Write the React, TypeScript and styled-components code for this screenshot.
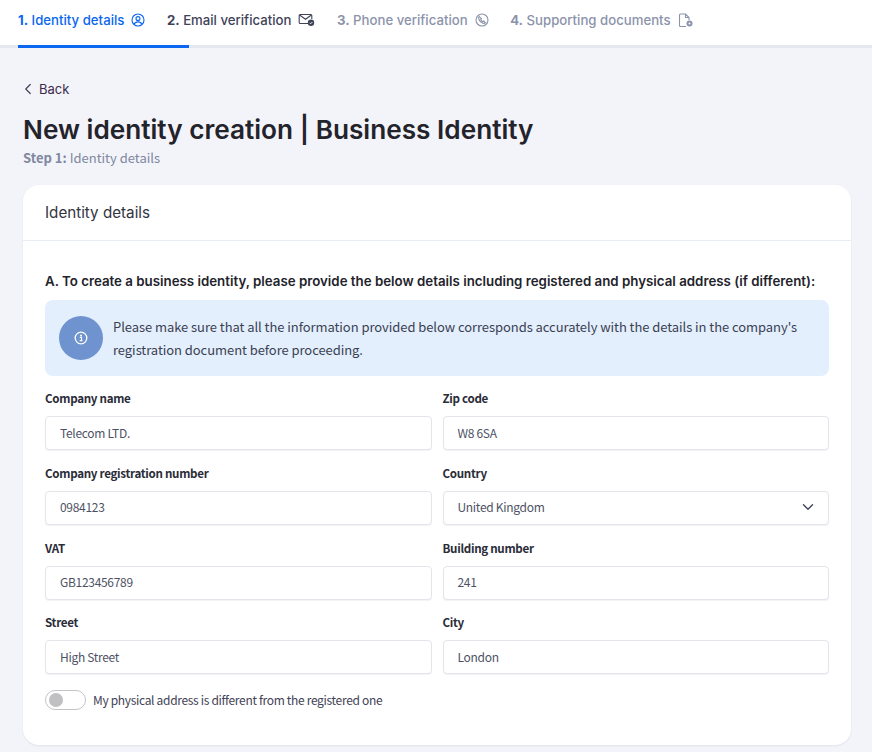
import styled, { createGlobalStyle } from "styled-components";
import { ChevronDown, ChevronLeft } from "lucide-react";

const GlobalStyle = createGlobalStyle`
  * {
    box-sizing: border-box;
  }

  body {
    margin: 0;
    background-color: #f3f4f9;
    font-family: "Noto Sans CJK SC", "Noto Sans", sans-serif;
    overflow: hidden;
  }
`;

const Page = styled.div`
  width: 872px;
  height: 752px;
  overflow: hidden;
`;

const TabBar = styled.nav`
  display: flex;
  gap: 21.5px;
  height: 48px;
  padding: 0 0 0 18px;
  background-color: #ffffff;
  border-bottom: 3px solid #e6e8f0;
`;

const Tab = styled.div<{ $state: "active" | "visited" | "todo" }>`
  position: relative;
  display: flex;
  align-items: center;
  gap: 7px;
  height: 45px;
  padding-bottom: 5px;
  font-family: "Inter", sans-serif;
  font-size: 13.2px;
  font-weight: 500;
  white-space: nowrap;
  color: ${(p) =>
    p.$state === "active" ? "#0b66f0" : p.$state === "visited" ? "#3f4358" : "#8c93ab"};

  ${(p) =>
    p.$state === "active" &&
    `&::after {
      content: "";
      position: absolute;
      left: 0;
      bottom: -3px;
      width: 171px;
      height: 3px;
      background-color: #0b66f0;
    }`}
`;

const TabNumber = styled.b`
  font-weight: 700;
`;

const Content = styled.main`
  padding: 31px 21px 0 23px;
`;

const BackLink = styled.a`
  display: flex;
  align-items: center;
  gap: 2px;
  height: 20px;
  margin-left: -4px;
  font-family: "Inter", sans-serif;
  font-size: 13px;
  color: #3c2a4d;
`;

const Title = styled.h1`
  margin: 14px 0 0;
  font-family: "Inter", sans-serif;
  font-size: 26.2px;
  line-height: 34px;
  font-weight: 600;
  color: #23232b;
`;

const StepLine = styled.p`
  margin: 1px 0 0;
  font-size: 13px;
  line-height: 20px;
  color: #8087a0;

  b {
    font-weight: 700;
  }
`;

const Card = styled.section`
  margin-top: 17px;
  background-color: #ffffff;
  border-radius: 16px;
  box-shadow: 0 1px 2px rgba(30, 40, 80, 0.08);
`;

const CardHeader = styled.header`
  display: flex;
  align-items: center;
  height: 56px;
  padding: 0 22px;
  border-bottom: 1px solid #e8edf3;
  font-family: "Inter", sans-serif;
  font-size: 15.2px;
  color: #33343f;
`;

const CardBody = styled.div`
  padding: 31px 22px 35px;
`;

const SectionHeading = styled.h2`
  margin: 0;
  font-family: "Inter", sans-serif;
  font-size: 13.3px;
  line-height: 18px;
  font-weight: 600;
  white-space: nowrap;
  color: #23232b;
`;

const Notice = styled.div`
  display: flex;
  align-items: center;
  gap: 10px;
  height: 76px;
  margin-top: 10px;
  padding: 0 14px;
  background-color: #e3effd;
  border-radius: 8px;
  font-size: 13px;
  line-height: 23px;
  letter-spacing: -0.06px;
  color: #3b3f52;
`;

const NoticeIcon = styled.span`
  display: flex;
  align-items: center;
  justify-content: center;
  flex: none;
  width: 44px;
  height: 44px;
  border-radius: 50%;
  background-color: #6f93cf;
`;

const FieldGrid = styled.div`
  display: grid;
  grid-template-columns: 1fr 1fr;
  column-gap: 11px;
  row-gap: 13.8px;
  margin-top: 13px;
`;

const Field = styled.div`
  display: flex;
  flex-direction: column;
  gap: 9px;
`;

const Label = styled.label`
  font-size: 11.6px;
  line-height: 18px;
  font-weight: 700;
  letter-spacing: -0.3px;
  color: #2a2c38;
`;

const InputBox = styled.div`
  display: flex;
  align-items: center;
  justify-content: space-between;
  height: 34px;
  padding: 0 11px 2px 14px;
  background-color: #ffffff;
  border: 1px solid #e3e5ea;
  border-radius: 4px;
  box-shadow: 0 1px 1px rgba(30, 40, 80, 0.06);
  font-size: 12px;
  letter-spacing: -0.3px;
  color: #4e5264;
`;

const ToggleRow = styled.div`
  display: flex;
  align-items: center;
  gap: 7px;
  margin-top: 16px;
  font-size: 12px;
  letter-spacing: -0.32px;
  color: #3f4256;
`;

const Toggle = styled.span`
  display: flex;
  align-items: center;
  width: 41px;
  height: 20px;
  padding-left: 3px;
  border: 1px solid #c4c4c8;
  border-radius: 10px;
  background-color: #ffffff;

  &::before {
    content: "";
    width: 14px;
    height: 14px;
    border-radius: 50%;
    background-color: #c0c0c2;
  }
`;

const ToggleLabel = styled.span`
  position: relative;
  top: -1px;
`;

const UserIcon = () => (
  <svg width="14" height="14" viewBox="0 0 14 14" fill="none" stroke="currentColor" strokeWidth="1.1">
    <circle cx="7" cy="7" r="6" />
    <circle cx="7" cy="5.6" r="2" />
    <path d="M3.2 11.2c.6-1.7 2-2.3 3.8-2.3s3.2.6 3.8 2.3" />
  </svg>
);

const MailIcon = () => (
  <svg width="17" height="14" viewBox="0 0 17 14" fill="none" stroke="currentColor" strokeWidth="1.1">
    <path d="M11 10.5H2.2a1 1 0 0 1-1-1V2.5a1 1 0 0 1 1-1h10.6a1 1 0 0 1 1 1V6" />
    <path d="M1.6 2l5.9 4.2L13.4 2" />
    <circle cx="13" cy="9.8" r="3.2" fill="currentColor" stroke="none" />
    <path d="M11.6 9.8l1 1 1.8-1.8" stroke="#ffffff" strokeWidth="0.9" />
  </svg>
);

const PhoneIcon = () => (
  <svg width="14" height="14" viewBox="0 0 14 14" fill="none" stroke="currentColor" strokeWidth="1.1">
    <circle cx="7" cy="7" r="6" />
    <path d="M4.2 3.6c-.7.7-.8 1.500-.5 2.400.7 2 2.300 3.600 4.300 4.300.9.300 1.700.200 2.400-.500L8.700 8l-.9.600C7 8.100 6.300 7.300 5.800 6.400l.6-.9z" />
  </svg>
);

const DocIcon = () => (
  <svg width="16" height="15" viewBox="0 0 16 15" fill="none" stroke="currentColor" strokeWidth="1.1">
    <path d="M8 13.500H2.500a1 1 0 0 1-1-1V2a1 1 0 0 1 1-1h5l3.500 3.500V7" />
    <path d="M7.500 1v3.500H11" />
    <circle cx="11.500" cy="10.500" r="3" fill="currentColor" stroke="none" />
    <circle cx="11.500" cy="10.500" r="1" fill="#ffffff" stroke="none" />
  </svg>
);

const InfoIcon = () => (
  <svg width="14" height="14" viewBox="0 0 14 14" fill="none">
    <circle cx="7" cy="7" r="5.800" stroke="#ffffff" strokeWidth="1.300" />
    <circle cx="7" cy="4.400" r="1" fill="#ffffff" />
    <path d="M5.800 6.300H7.500V9.500H8.400M5.700 9.700H8.400" stroke="#ffffff" strokeWidth="1.200" />
  </svg>
);

const fields = [
  { label: "Company name", value: "Telecom LTD." },
  { label: "Zip code", value: "W8 6SA" },
  { label: "Company registration number", value: "0984123" },
  { label: "Country", value: "United Kingdom", select: true },
  { label: "VAT", value: "GB123456789" },
  { label: "Building number", value: "241" },
  { label: "Street", value: "High Street" },
  { label: "City", value: "London" },
];

export default function App() {
  return (
    <Page>
      <GlobalStyle />
      <TabBar>
        <Tab $state="active">
          <span><TabNumber>1.</TabNumber> Identity details</span>
          <UserIcon />
        </Tab>
        <Tab $state="visited">
          <span><TabNumber>2.</TabNumber> Email verification</span>
          <MailIcon />
        </Tab>
        <Tab $state="todo">
          <span><TabNumber>3.</TabNumber> Phone verification</span>
          <PhoneIcon />
        </Tab>
        <Tab $state="todo">
          <span><TabNumber>4.</TabNumber> Supporting documents</span>
          <DocIcon />
        </Tab>
      </TabBar>
      <Content>
        <BackLink>
          <ChevronLeft size={18} strokeWidth={1.6} color="#3f4358" />
          Back
        </BackLink>
        <Title>New identity creation | Business Identity</Title>
        <StepLine><b>Step 1:</b> Identity details</StepLine>
        <Card>
          <CardHeader>Identity details</CardHeader>
          <CardBody>
            <SectionHeading>
              A. To create a business identity, please provide the below details including registered and physical address (if different):
            </SectionHeading>
            <Notice>
              <NoticeIcon><InfoIcon /></NoticeIcon>
              <span>
                Please make sure that all the information provided below corresponds accurately with the details in the company's registration document before proceeding.
              </span>
            </Notice>
            <FieldGrid>
              {fields.map((f) => (
                <Field key={f.label}>
                  <Label>{f.label}</Label>
                  <InputBox>
                    {f.value}
                    {f.select && <ChevronDown size={18} strokeWidth={1.8} color="#3f4358" />}
                  </InputBox>
                </Field>
              ))}
            </FieldGrid>
            <ToggleRow>
              <Toggle />
              <ToggleLabel>My physical address is different from the registered one</ToggleLabel>
            </ToggleRow>
          </CardBody>
        </Card>
      </Content>
    </Page>
  );
}
